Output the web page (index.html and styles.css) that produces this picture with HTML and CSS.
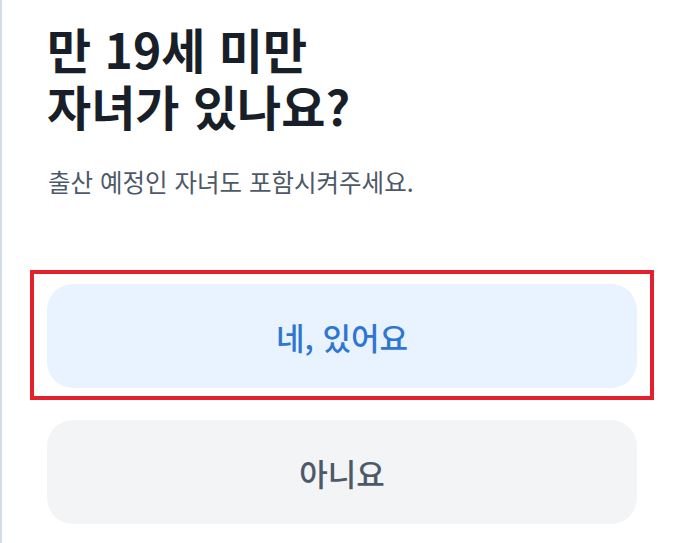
FILE: index.html
```html
<!DOCTYPE html>
<html lang="ko">
<head>
<meta charset="utf-8">
<title>자녀 여부</title>
<link rel="stylesheet" href="styles.css">
</head>
<body>
<div class="screen">
  <main class="content">
    <h1 class="title">만 19세 미만<br>자녀가 있나요?</h1>
    <p class="subtitle">출산 예정인 자녀도 포함시켜주세요.</p>
    <div class="choices">
      <div class="highlight">
        <button class="choice choice-yes" type="button">네, 있어요</button>
      </div>
      <button class="choice choice-no" type="button">아니요</button>
    </div>
  </main>
</div>
</body>
</html>
```
FILE: styles.css
```css
html, body {
  margin: 0;
  padding: 0;
  background: #ffffff;
}

body {
  font-family: "Noto Sans CJK KR", "Noto Sans", sans-serif;
  color: #191f28;
}

.screen {
  min-height: 543px;
  border-left: 2px solid #d4dbe3;
  box-sizing: border-box;
}

.content {
  padding: 20px 39px 0 45px;
}

.title {
  margin: 0;
  font-size: 48px;
  font-weight: 700;
  line-height: 57px;
  color: #191f28;
  letter-spacing: 0;
}

.subtitle {
  margin: 31px 0 0 1px;
  font-size: 24.5px;
  line-height: 34px;
  font-weight: 400;
  color: #4e5968;
}

.choices {
  display: flex;
  flex-direction: column;
  gap: 32px;
  margin-top: 85px;
}

.highlight {
  position: relative;
}

.highlight::after {
  content: "";
  position: absolute;
  top: -14px;
  bottom: -12px;
  left: -17px;
  right: -17px;
  border: 4px solid #e3202b;
  pointer-events: none;
}

.choice {
  display: flex;
  align-items: center;
  justify-content: center;
  width: 100%;
  height: 104px;
  border: none;
  border-radius: 26px;
  font-family: "Noto Sans CJK KR", "Noto Sans", sans-serif;
  font-size: 31px;
  font-weight: 500;
  padding: 0;
  margin: 0;
}

.choice-yes {
  background: #e8f3ff;
  color: #2f76d2;
}

.choice-no {
  background: #f2f4f6;
  color: #4e5968;
}
```
